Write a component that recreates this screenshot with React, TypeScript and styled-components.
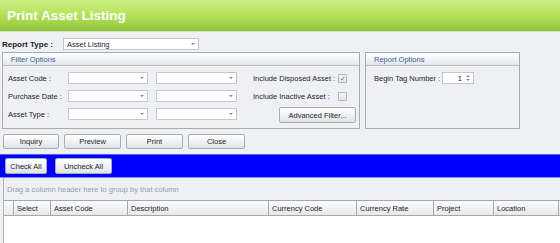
import styled, { createGlobalStyle } from "styled-components";

const GlobalStyle = createGlobalStyle`
  html, body {
    margin: 0;
    padding: 0;
    background: #eef0f3;
    overflow: hidden;
  }
  body {
    font-family: "Liberation Sans", Arial, sans-serif;
    font-size: 7.5px;
    color: #1e1e1e;
  }
`;

const Page = styled.div`
  width: 560px;
  height: 243px;
  display: flex;
  flex-direction: column;
  overflow: hidden;
`;

const TitleBar = styled.div`
  height: 31px;
  display: flex;
  align-items: center;
  padding-left: 7px;
  background: linear-gradient(to bottom, #cbee86 0%, #b8e35c 45%, #a2d34a 75%, #88c23b 100%);
  border-bottom: 1px solid #d6e6c0;
`;

const Title = styled.h1`
  margin: 0;
  font-size: 13.5px;
  font-weight: 700;
  color: #ffffff;
`;

const ReportTypeRow = styled.div`
  display: flex;
  align-items: center;
  height: 14px;
  margin-top: 5px;
  padding-left: 2px;
`;

const BoldLabel = styled.span`
  font-weight: 700;
  font-size: 8px;
  width: 61px;
`;

const Combo = styled.div<{ $w: number }>`
  position: relative;
  width: ${(p) => p.$w}px;
  height: 12px;
  box-sizing: border-box;
  background: #ffffff;
  border: 1px solid #c3c7cc;
  padding-left: 3px;
  display: flex;
  align-items: center;
  &::after {
    content: "";
    position: absolute;
    right: 3px;
    top: 4px;
    border-left: 2px solid transparent;
    border-right: 2px solid transparent;
    border-top: 2px solid #8a8a8a;
  }
`;

const Panels = styled.div`
  display: flex;
  gap: 5px;
  margin-top: 1px;
  padding-left: 2px;
`;

const GroupBox = styled.div<{ $w: number }>`
  width: ${(p) => p.$w}px;
  height: 77px;
  box-sizing: border-box;
  border: 1px solid #a7abb0;
  display: flex;
  flex-direction: column;
`;

const GroupHeader = styled.div`
  height: 12px;
  display: flex;
  align-items: center;
  padding-left: 8px;
  color: #3d5a99;
  background: linear-gradient(to bottom, #ffffff, #e3e7ed);
  border-bottom: 1px solid #b9bdc3;
`;

const FilterBody = styled.div`
  display: grid;
  grid-template-columns: 60px 88px 81px 1fr;
  grid-auto-rows: 18px;
  align-items: center;
  padding: 3px 3px 0 5px;
`;

const Label = styled.span<{ $w?: number }>`
  white-space: nowrap;
  width: ${(p) => (p.$w ? `${p.$w}px` : "auto")};
`;

const CheckCell = styled.div`
  display: flex;
  align-items: center;
  padding-left: 16px;
`;

const CheckLabel = styled.span`
  width: 85px;
  white-space: nowrap;
`;

const CheckBox = styled.span`
  width: 9px;
  height: 9px;
  box-sizing: border-box;
  border: 1px solid #b4b8be;
  background: linear-gradient(to bottom, #f4f5f7, #e2e5e9);
  display: flex;
  align-items: center;
  justify-content: center;
  color: #5a6f9a;
  font-size: 7px;
  line-height: 1;
`;

const Button = styled.button<{ $w: number; $h?: number }>`
  width: ${(p) => p.$w}px;
  height: ${(p) => p.$h ?? 15}px;
  padding: 0;
  font-family: "Liberation Sans", Arial, sans-serif;
  font-size: 7.5px;
  color: #1e1e1e;
  background: linear-gradient(to bottom, #ffffff 0%, #f1f2f4 50%, #dfe2e6 100%);
  border: 1px solid #a9adb3;
  border-radius: 2px;
`;

const AdvRow = styled.div`
  grid-column: 4;
  display: flex;
  justify-content: flex-end;
  align-self: end;
`;

const ReportBody = styled.div`
  display: flex;
  align-items: center;
  padding: 6px 0 0 8px;
`;

const Spin = styled.div`
  width: 32px;
  height: 12px;
  box-sizing: border-box;
  border: 1px solid #c3c7cc;
  background: #fff;
  display: flex;
  align-items: center;
  justify-content: flex-end;
`;

const SpinArrows = styled.span`
  display: flex;
  flex-direction: column;
  gap: 2px;
  margin: 0 3px 0 4px;
  & > i {
    display: block;
    border-left: 2px solid transparent;
    border-right: 2px solid transparent;
  }
  & > i:first-child { border-bottom: 2px solid #888; }
  & > i:last-child { border-top: 2px solid #888; }
`;

const ActionRow = styled.div`
  display: flex;
  gap: 5px;
  padding: 5px 0 0 3px;
`;

const BlueBar = styled.div`
  margin-top: 5px;
  height: 24px;
  box-sizing: border-box;
  background: #0000ff;
  border-top: 1px solid #5a5aff;
  border-bottom: 1px solid #8a8aff;
  display: flex;
  align-items: center;
  gap: 8px;
  padding-left: 5px;
`;

const GridArea = styled.div`
  margin-left: 3px;
  flex: 1;
  border-left: 1px solid #b0b3b8;
  display: flex;
  flex-direction: column;
`;

const GroupPanel = styled.div`
  height: 22px;
  display: flex;
  align-items: center;
  padding-left: 3px;
  color: #9a9ea4;
  background: #eff0f2;
`;

const HeaderRow = styled.div`
  display: flex;
  height: 14px;
  border-top: 1px solid #a4a8ad;
  border-bottom: 1px solid #a4a8ad;
  background: linear-gradient(to bottom, #fbfbfc, #e6e8eb);
`;

const HeaderCell = styled.div<{ $w: number }>`
  flex: 0 0 ${(p) => p.$w}px;
  box-sizing: border-box;
  border-right: 1px solid #a4a8ad;
  display: flex;
  align-items: center;
  padding-left: 3px;
  white-space: nowrap;
  overflow: hidden;
`;

const GridBody = styled.div`
  flex: 1;
  background: #ffffff;
`;

const columns = [
  { name: "", w: 10 },
  { name: "Select", w: 37 },
  { name: "Asset Code", w: 77 },
  { name: "Description", w: 141 },
  { name: "Currency Code", w: 88 },
  { name: "Currency Rate", w: 77 },
  { name: "Project", w: 60 },
  { name: "Location", w: 65 },
  { name: "", w: 40 },
];

export default function App() {
  return (
    <Page>
      <GlobalStyle />
      <TitleBar>
        <Title>Print Asset Listing</Title>
      </TitleBar>
      <ReportTypeRow>
        <BoldLabel>Report Type :</BoldLabel>
        <Combo $w={136}>Asset Listing</Combo>
      </ReportTypeRow>
      <Panels>
        <GroupBox $w={358}>
          <GroupHeader>Filter Options</GroupHeader>
          <FilterBody>
            <Label>Asset Code :</Label>
            <Combo $w={80} />
            <Combo $w={81} />
            <CheckCell>
              <CheckLabel>Include Disposed Asset :</CheckLabel>
              <CheckBox>✓</CheckBox>
            </CheckCell>
            <Label>Purchase Date :</Label>
            <Combo $w={80} />
            <Combo $w={81} />
            <CheckCell>
              <CheckLabel>Include Inactive Asset :</CheckLabel>
              <CheckBox />
            </CheckCell>
            <Label>Asset Type :</Label>
            <Combo $w={80} />
            <Combo $w={81} />
            <AdvRow>
              <Button $w={77} $h={16}>Advanced Filter...</Button>
            </AdvRow>
          </FilterBody>
        </GroupBox>
        <GroupBox $w={155}>
          <GroupHeader>Report Options</GroupHeader>
          <ReportBody>
            <Label $w={68}>Begin Tag Number :</Label>
            <Spin>
              1
              <SpinArrows>
                <i />
                <i />
              </SpinArrows>
            </Spin>
          </ReportBody>
        </GroupBox>
      </Panels>
      <ActionRow>
        <Button $w={56}>Inquiry</Button>
        <Button $w={57}>Preview</Button>
        <Button $w={57}>Print</Button>
        <Button $w={57}>Close</Button>
      </ActionRow>
      <BlueBar>
        <Button $w={42} $h={16}>Check All</Button>
        <Button $w={57} $h={16}>Uncheck All</Button>
      </BlueBar>
      <GridArea>
        <GroupPanel>Drag a column header here to group by that column</GroupPanel>
        <HeaderRow>
          {columns.map((c, i) => (
            <HeaderCell key={i} $w={c.w}>
              {c.name}
            </HeaderCell>
          ))}
        </HeaderRow>
        <GridBody />
      </GridArea>
    </Page>
  );
}
